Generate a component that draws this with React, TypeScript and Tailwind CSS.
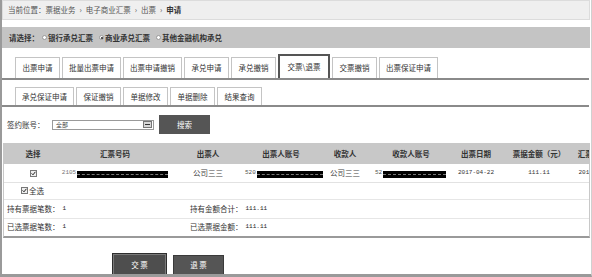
import React from "react";

const CJK = "font-['Noto_Sans_CJK_SC','Noto_Sans',sans-serif]";
const MONO = "font-['Liberation_Mono',monospace]";

type TabDef = { label: string; w: string; active?: boolean };

const row1: TabDef[] = [
  { label: "出票申请", w: "w-[45px]" },
  { label: "批量出票申请", w: "w-[59px]" },
  { label: "出票申请撤销", w: "w-[59px]" },
  { label: "承兑申请", w: "w-[45px]" },
  { label: "承兑撤销", w: "w-[45px]" },
  { label: "交票\\退票", w: "w-[52px]", active: true },
  { label: "交票撤销", w: "w-[45px]" },
  { label: "出票保证申请", w: "w-[59px]" },
];

const row2: TabDef[] = [
  { label: "承兑保证申请", w: "w-[59px]" },
  { label: "保证撤销", w: "w-[45px]" },
  { label: "单据修改", w: "w-[45px]" },
  { label: "单据删除", w: "w-[45px]" },
  { label: "结果查询", w: "w-[45px]" },
];

function Tab({ t, h }: { t: TabDef; h: string }) {
  if (t.active) {
    return (
      <div
        className={`${t.w} h-[24px] border-2 border-b-0 border-[#555] bg-white flex items-center justify-center text-[7.5px] text-[#333] leading-none`}
      >
        {t.label}
      </div>
    );
  }
  return (
    <div
      className={`${t.w} ${h} border border-b-0 border-[#c4c4c4] bg-white flex items-center justify-center text-[7.5px] text-[#333] leading-none`}
    >
      {t.label}
    </div>
  );
}

function Check() {
  return (
    <span className="inline-flex w-[7px] h-[7px] border border-[#777] bg-[#eee] items-center justify-center">
      <svg width="5" height="5" viewBox="0 0 5 5">
        <path d="M0.6 2.4 L2 3.8 L4.4 0.8" stroke="#222" strokeWidth="1" fill="none" />
      </svg>
    </span>
  );
}

function Radio({ on }: { on?: boolean }) {
  return (
    <span className="inline-flex w-[5px] h-[5px] rounded-full bg-white border border-[#999] items-center justify-center mr-[1px]">
      {on && <span className="w-[2px] h-[2px] rounded-full bg-[#222]" />}
    </span>
  );
}

function Mask({ w }: { w: string }) {
  return (
    <span className={`inline-flex ${w} h-[7px] bg-black items-center`}>
      <span className="w-full h-0 border-t border-dashed border-[#777]" />
    </span>
  );
}

export default function App() {
  return (
    <div
      className={`${CJK} w-[592px] h-[277px] overflow-hidden bg-white border-l-2 border-l-[#9a9a9a] border-r border-r-[#d0d0d0] border-b-[3px] border-b-[#9a9a9a] text-[#333]`}
    >
      {/* breadcrumb */}
      <div className="h-[20px] mr-[1px] bg-[#efefef] border border-[#dcdcdc] flex items-center pl-[5px] text-[7.5px] text-[#555] leading-none">
        <span>当前位置：票据业务</span>
        <span className="mx-[4px]">›</span>
        <span>电子商业汇票</span>
        <span className="mx-[4px]">›</span>
        <span>出票</span>
        <span className="mx-[4px]">›</span>
        <span className="font-bold text-[#333]">申请</span>
      </div>

      {/* choose bar */}
      <div className="mt-[7px] mr-[1px] h-[21px] bg-[#c4c4c4] flex items-center pl-[7px] text-[7.5px] font-bold text-[#333] leading-none">
        <span>请选择：</span>
        <span className="ml-[3px] inline-flex items-center">
          <Radio />
          银行承兑汇票
        </span>
        <span className="ml-[6px] inline-flex items-center">
          <Radio on />
          商业承兑汇票
        </span>
        <span className="ml-[6px] inline-flex items-center">
          <Radio />
          其他金融机构承兑
        </span>
      </div>

      {/* tabs row 1 */}
      <div className="mt-[6px] mr-[2px] flex items-end gap-[2px] pl-[13px] border-b-2 border-[#8a8a8a]">
        {row1.map((t) => (
          <Tab key={t.label} t={t} h="h-[21px]" />
        ))}
      </div>

      {/* tabs row 2 */}
      <div className="mt-[7px] mr-[2px] flex items-end gap-[2px] pl-[13px] border-b-2 border-[#8a8a8a]">
        {row2.map((t) => (
          <Tab key={t.label} t={t} h="h-[18px]" />
        ))}
      </div>

      {/* search */}
      <div className="mt-[8px] flex items-center pl-[5px] h-[19px]">
        <span className="w-[45px] text-[7.5px] leading-none">签约账号：</span>
        <div className="w-[102px] h-[10px] border border-[#9a9a9a] bg-white flex items-center justify-between pl-[3px] pr-[1px]">
          <span className="text-[6px] leading-none text-[#444]">全部</span>
          <span className="w-[9px] h-[7px] bg-[#d8d8d8] border border-[#777] flex items-center justify-center">
            <span className="w-[5px] h-[1px] bg-[#333]" />
          </span>
        </div>
        <div className="ml-[5px] w-[51px] h-[19px] bg-[#555] flex items-center justify-center text-white text-[7.5px] leading-none">
          搜索
        </div>
      </div>

      {/* table box */}
      <div className="mt-[9px] ml-[1px] mr-[1px] border-l border-t border-r border-[#c8c8c8] border-b-2 border-b-[#9a9a9a] overflow-hidden">
        <table className="table-fixed border-collapse w-[617px] text-[7.5px] leading-none">
          <colgroup>
            <col className="w-[58px]" />
            <col className="w-[106px]" />
            <col className="w-[80px]" />
            <col className="w-[66px]" />
            <col className="w-[62px]" />
            <col className="w-[70px]" />
            <col className="w-[60px]" />
            <col className="w-[66px]" />
            <col className="w-[49px]" />
          </colgroup>
          <thead>
            <tr className="h-[20px] bg-[#c8c8c8] font-bold text-[#333]">
              <th className="p-0 font-bold">选择</th>
              <th className="p-0 font-bold">汇票号码</th>
              <th className="p-0 font-bold">出票人</th>
              <th className="p-0 font-bold">出票人账号</th>
              <th className="p-0 font-bold">收款人</th>
              <th className="p-0 font-bold">收款人账号</th>
              <th className="p-0 font-bold">出票日期</th>
              <th className="p-0 font-bold">票据金额（元）</th>
              <th className="p-0 font-bold whitespace-nowrap">汇票到期日</th>
            </tr>
          </thead>
          <tbody>
            <tr className="h-[18px] border-b border-[#e2e2e2]">
              <td className="p-0 text-center">
                <span className="inline-flex align-middle">
                  <Check />
                </span>
              </td>
              <td className="p-0">
                <div className="flex items-center justify-center">
                  <span className={`${MONO} text-[6px] text-[#777]`}>2105</span>
                  <span className="ml-[1px]">
                    <Mask w="w-[91px]" />
                  </span>
                </div>
              </td>
              <td className="p-0 text-center text-[#444]">公司三三</td>
              <td className="p-0">
                <div className="flex items-center">
                  <span className={`${MONO} text-[6px] text-[#555] ml-[-3px]`}>520</span>
                  <span className="ml-[1px]">
                    <Mask w="w-[66px]" />
                  </span>
                </div>
              </td>
              <td className="p-0 text-center text-[#444]">公司三三</td>
              <td className="p-0">
                <div className="flex items-center">
                  <span className={`${MONO} text-[6px] text-[#555] ml-[-1px]`}>52</span>
                  <span className="ml-[1px]">
                    <Mask w="w-[63px]" />
                  </span>
                </div>
              </td>
              <td className={`p-0 text-center ${MONO} text-[6px] text-[#333]`}>2017-04-22</td>
              <td className={`p-0 text-center ${MONO} text-[6px] text-[#333]`}>111.11</td>
              <td className={`p-0 text-center ${MONO} text-[6px] text-[#333] whitespace-nowrap`}>2017-10-22</td>
            </tr>
          </tbody>
        </table>
        <div className="h-[17px] border-b border-[#e6e6e6] flex items-center pl-[17px] text-[7.5px] leading-none">
          <Check />
          <span className="ml-[1px]">全选</span>
        </div>
        <div className="h-[19px] border-b border-[#e6e6e6] flex items-center text-[7.5px] leading-none">
          <span className="w-[186px] pl-[3px] flex items-center">
            持有票据笔数：
            <span className={`${MONO} text-[6px] text-[#222] ml-[3px]`}>1</span>
          </span>
          <span className="flex items-center">
            持有金额合计：
            <span className={`${MONO} text-[6px] text-[#222] ml-[3px]`}>111.11</span>
          </span>
        </div>
        <div className="h-[17px] flex items-center text-[7.5px] leading-none">
          <span className="w-[186px] pl-[3px] flex items-center">
            已选票据笔数：
            <span className={`${MONO} text-[6px] text-[#222] ml-[3px]`}>1</span>
          </span>
          <span className="flex items-center">
            已选票据金额：
            <span className={`${MONO} text-[6px] text-[#222] ml-[3px]`}>111.11</span>
          </span>
        </div>
      </div>

      {/* buttons */}
      <div className="mt-[15px] flex items-start pl-[110px] gap-[6px]">
        <div className="w-[55px] h-[26px] bg-[#4e4e4e] border border-[#2e2e2e] shadow-[inset_0_0_0_1px_#7a7a7a] flex items-start justify-center pt-[7px] text-white text-[7.5px] leading-none">
          交 票
        </div>
        <div className="mt-[2px] w-[51px] h-[24px] bg-[#555] border border-[#3a3a3a] flex items-start justify-center pt-[5px] text-white text-[7.5px] leading-none">
          退 票
        </div>
      </div>
    </div>
  );
}
